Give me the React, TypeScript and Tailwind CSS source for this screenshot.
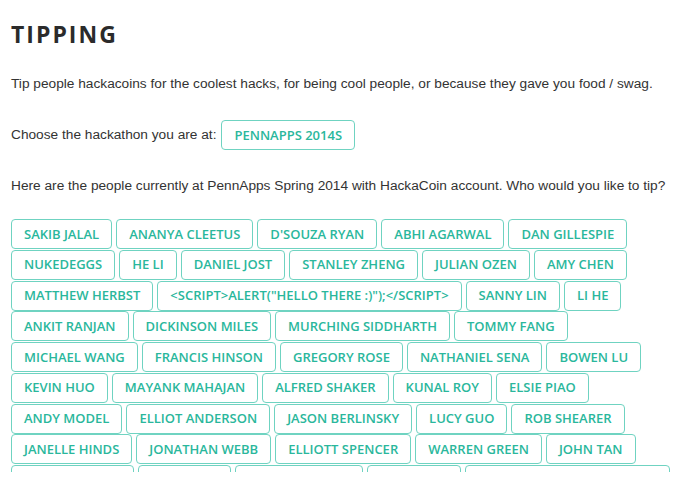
import React from 'react';

const people = [
  'Sakib Jalal',
  'Ananya Cleetus',
  "D'Souza Ryan",
  'Abhi Agarwal',
  'Dan Gillespie',
  'nukedeggs',
  'He Li',
  'Daniel Jost',
  'Stanley Zheng',
  'Julian Ozen',
  'Amy Chen',
  'Matthew Herbst',
  '<script>alert("hello there :)");</script>',
  'Sanny Lin',
  'Li He',
  'Ankit Ranjan',
  'Dickinson Miles',
  'Murching Siddharth',
  'Tommy Fang',
  'Michael Wang',
  'Francis Hinson',
  'Gregory Rose',
  'Nathaniel Sena',
  'Bowen Lu',
  'Kevin Huo',
  'Mayank Mahajan',
  'Alfred Shaker',
  'Kunal Roy',
  'Elsie Piao',
  'Andy Model',
  'Elliot Anderson',
  'Jason Berlinsky',
  'Lucy Guo',
  'Rob Shearer',
  'Janelle Hinds',
  'Jonathan Webb',
  'Elliott Spencer',
  'Warren Green',
  'John Tan',
  'Brandon Chu',
  'Eric Yang',
  'Victoria Lopez',
  'Sam Ortiz',
  'Alexandra Worthington',
];

function TealButton({ label }: { label: string }) {
  return (
    <button className="h-[30px] px-3 rounded-[4px] border border-[#6fd3c1] bg-white text-[#2ab79c] text-[13px] font-semibold uppercase whitespace-nowrap [font-family:'Open_Sans',sans-serif] leading-none">
      {label}
    </button>
  );
}

export default function App() {
  return (
    <div className="min-h-screen bg-white px-[11px] text-[13.7px] text-[#333] [font-family:'Liberation_Sans',Arial,sans-serif]">
      <h1 className="pt-[22px] text-[23px] font-bold tracking-[2px] text-[#2b2b2b] leading-[24px] [font-family:'Open_Sans',sans-serif]">
        TIPPING
      </h1>

      <p className="mt-[28px] leading-[20px]">
        Tip people hackacoins for the coolest hacks, for being cool people, or because they gave you food / swag.
      </p>

      <div className="mt-[26px] flex items-center gap-[5px]">
        <span>Choose the hackathon you are at:</span>
        <TealButton label="PennApps 2014S" />
      </div>

      <p className="mt-[26px] leading-[20px]">
        Here are the people currently at PennApps Spring 2014 with HackaCoin account. Who would you like to tip?
      </p>

      {/* list box: the ninth row is cut off at the edge, as in the screenshot */}
      <div className="mt-[23px] h-[253px] overflow-hidden">
        <div className="flex flex-wrap gap-x-1 gap-y-[0.75px]">
          {people.map((p) => (
            <TealButton key={p} label={p} />
          ))}
        </div>
      </div>
    </div>
  );
}
